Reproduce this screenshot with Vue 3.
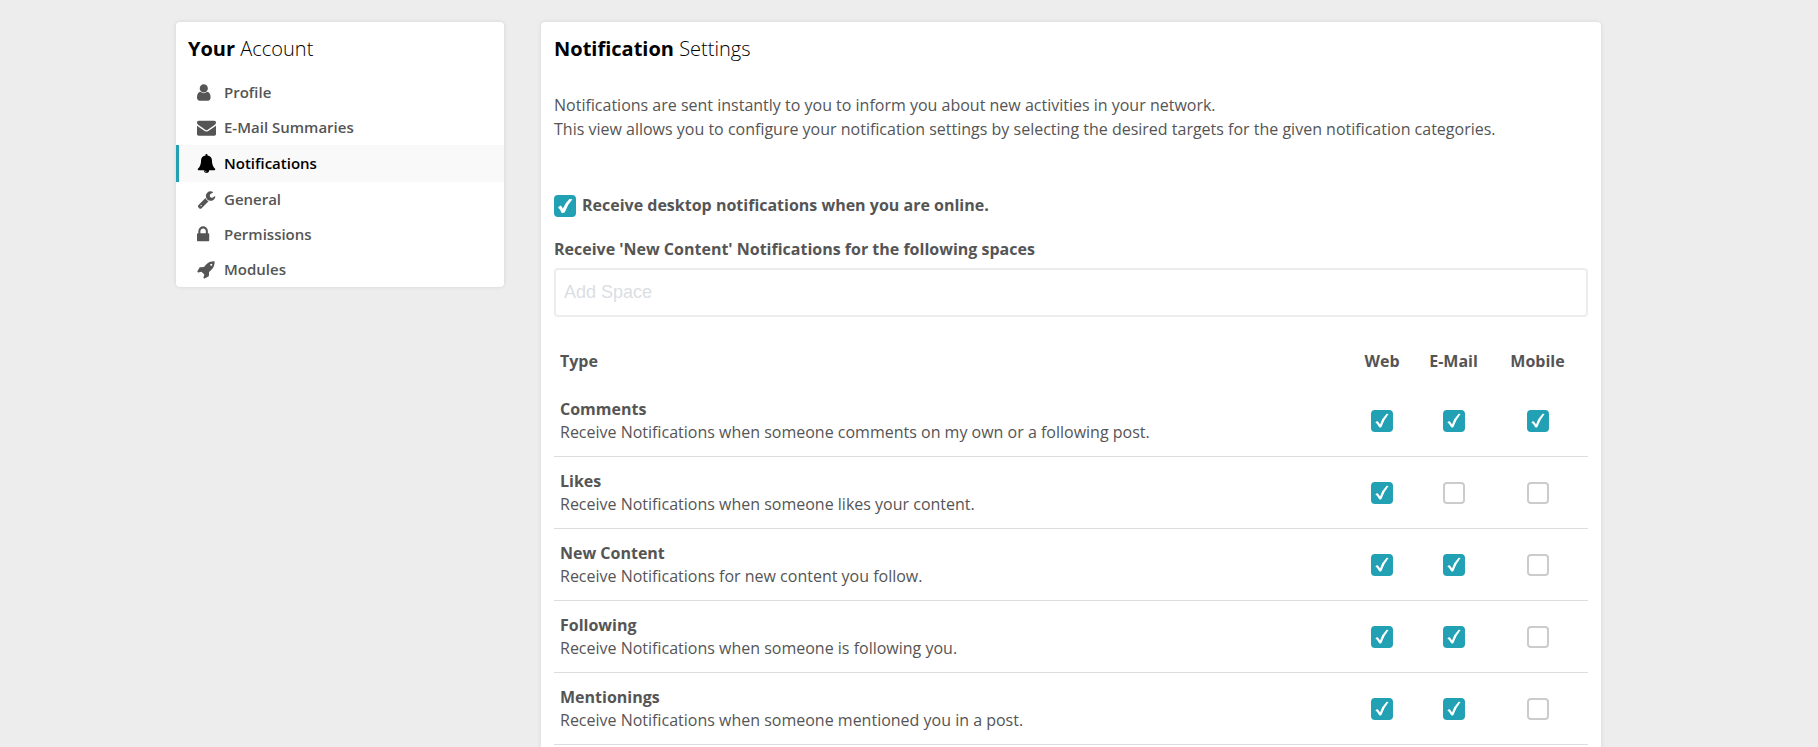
<script setup>
import { ref } from 'vue'

const menu = [
  { label: 'Profile', path: 'M1280 1399q0 109-62.5 187t-150.5 78h-854q-88 0-150.5-78t-62.5-187q0-85 8.5-160.5t31.5-152 58.5-131 94-89 134.5-34.5q131 128 313 128t313-128q76 0 134.5 34.5t94 89 58.5 131 31.5 152 8.5 160.5zm-256-887q0 159-112.5 271.5t-271.5 112.5-271.5-112.5-112.5-271.5 112.5-271.5 271.5-112.5 271.5 112.5 112.5 271.5z' },
  { label: 'E-Mail Summaries', path: 'M1792 710v794q0 66-47 113t-113 47h-1472q-66 0-113-47t-47-113v-794q44 49 101 87 362 246 497 345 57 42 92.5 65.5t94.5 48 110 24.5h2q51 0 110-24.5t94.5-48 92.5-65.5q170-123 498-345 57-39 100-87zm0-294q0 79-49 151t-122 123q-376 261-468 325-10 7-42.5 31t-54 38.5-52 32.5-57.5 27-50 9h-2q-23 0-50-9t-57.5-27-52-32.5-54-38.5-42.5-31q-91-64-262-182.5t-205-142.5q-62-42-117-115.5t-55-136.5q0-78 41.5-130t118.5-52h1472q65 0 112.5 47t47.5 113z' },
  { label: 'Notifications', active: true, path: 'M912 1696q0-16-16-16-59 0-101.5-42.5t-42.5-101.5q0-16-16-16t-16 16q0 73 51.5 124.5t124.5 51.5q16 0 16-16zm816-288q0 52-38 90t-90 38h-448q0 106-75 181t-181 75-181-75-75-181h-448q-52 0-90-38t-38-90q50-42 91-88t85-119.5 74.5-158.5 50-206 19.5-260q0-152 117-282.5t307-158.5q-8-19-8-39 0-40 28-68t68-28 68 28 28 68q0 20-8 39 190 28 307 158.5t117 282.5q0 139 19.5 260t50 206 74.5 158.5 85 119.5 91 88z' },
  { label: 'General', path: 'M448 1472q0-26-19-45t-45-19-45 19-19 45 19 45 45 19 45-19 19-45zm644-420l-682 682q-37 37-90 37-52 0-91-37l-106-108q-38-36-38-90 0-53 38-91l681-681q39 98 114.5 173.5t173.5 114.5zm634-435q0 39-23 106-47 134-164.5 217.5t-258.5 83.5q-185 0-316.5-131.5t-131.5-316.5 131.5-316.5 316.5-131.5q58 0 121.5 16.5t107.5 46.5q16 11 16 28t-16 28l-293 169v224l193 107q5-3 79-48.5t135.5-81 70.5-35.5q15 0 23.5 10t8.5 25z' },
  { label: 'Permissions', path: 'M320 768h512v-192q0-106-75-181t-181-75-181 75-75 181v192zm832 96v576q0 40-28 68t-68 28h-960q-40 0-68-28t-28-68v-576q0-40 28-68t68-28h32v-192q0-184 132-316t316-132 316 132 132 316v192h32q40 0 68 28t28 68z' },
  { label: 'Modules', path: 'M1440 448q0-40-28-68t-68-28-68 28-28 68 28 68 68 28 68-28 28-68zm224-288q0 249-75.5 430.5t-253.5 360.5q-81 80-195 176l-20 379q-2 16-16 26l-384 224q-7 4-16 4-12 0-23-9l-64-64q-13-14-8-32l85-276-281-281-276 85q-3 1-9 1-14 0-23-9l-64-64q-17-19-5-39l224-384q10-14 26-16l379-20q96-114 176-195 188-187 358-258t431-71q14 0 24 9.5t10 22.5z' },
]

const targets = ['Web', 'E-Mail', 'Mobile']

const desktop = ref(true)
const categories = ref([
  { name: 'Comments', text: 'Receive Notifications when someone comments on my own or a following post.', on: [true, true, true] },
  { name: 'Likes', text: 'Receive Notifications when someone likes your content.', on: [true, false, false] },
  { name: 'New Content', text: 'Receive Notifications for new content you follow.', on: [true, true, false] },
  { name: 'Following', text: 'Receive Notifications when someone is following you.', on: [true, true, false] },
  { name: 'Mentionings', text: 'Receive Notifications when someone mentioned you in a post.', on: [true, true, false] },
])
</script>

<template>
  <div class="page">
    <aside class="card side">
      <h2 class="heading"><strong>Your</strong> Account</h2>
      <nav class="menu">
        <a v-for="m in menu" :key="m.label" href="#" class="item" :class="{ active: m.active }">
          <svg class="icon" viewBox="0 0 1792 1792" aria-hidden="true"><path :d="m.path" /></svg>
          <span>{{ m.label }}</span>
        </a>
      </nav>
    </aside>

    <main class="card main">
      <h1 class="heading"><strong>Notification</strong> Settings</h1>
      <p class="intro">
        Notifications are sent instantly to you to inform you about new activities in your network.<br />
        This view allows you to configure your notification settings by selecting the desired targets for the given
        notification categories.
      </p>

      <label class="desktop">
        <span class="check">
          <input v-model="desktop" type="checkbox" />
          <svg viewBox="0 0 22 22" aria-hidden="true"><path d="M4 12.5L6.4 10.6Q8 11.8 8.9 13.6Q11.5 7.5 15.4 4L18.4 4.3Q13.5 9.500 10.8 17.3Q9 18.600 7.200 17.4Q6.300 14.2 4 12.5Z" /></svg>
        </span>
        <span>Receive desktop notifications when you are online.</span>
      </label>

      <label class="spaces-label" for="spaces">Receive 'New Content' Notifications for the following spaces</label>
      <input id="spaces" class="spaces" type="text" placeholder="Add Space" />

      <table class="grid">
        <colgroup>
          <col />
          <col class="c-web" />
          <col class="c-mail" />
          <col class="c-mobile" />
        </colgroup>
        <thead>
          <tr>
            <th scope="col" class="type">Type</th>
            <th v-for="t in targets" :key="t" scope="col">{{ t }}</th>
          </tr>
        </thead>
        <tbody>
          <tr v-for="c in categories" :key="c.name">
            <td><strong>{{ c.name }}</strong><br />{{ c.text }}</td>
            <td v-for="(t, i) in targets" :key="t">
              <label class="check">
                <input v-model="c.on[i]" type="checkbox" :aria-label="c.name + ' ' + t" />
                <svg viewBox="0 0 22 22" aria-hidden="true"><path d="M4.3 12.3L6.2 11Q8 12.4 9 14.4Q11.2 8 15.7 3.8L17.6 3.9Q13 9.5 10.4 17Q9.4 17.9 8.3 17.3Q6.8 14.1 4.3 12.3Z" /></svg>
              </label>
            </td>
          </tr>
        </tbody>
      </table>
    </main>
  </div>
</template>

<style>
body {
  margin: 0;
  background: #ededed;
}
</style>

<style scoped>
.page {
  display: grid;
  grid-template-columns: 328px minmax(0, 1fr);
  align-items: start;
  gap: 37px;
  padding: 22px 217px 24px 176px;
  color: #555;
  font-family: "Open Sans", sans-serif;
  font-size: 16px;
  line-height: 23px;
}
.card {
  background: #fff;
  border-radius: 4px;
  box-shadow: 0 0 4px rgba(0, 0, 0, 0.1);
}
.heading {
  margin: 0;
  color: #000;
  font-size: 20px;
  font-weight: 300;
  line-height: 28px;
}
.heading strong {
  font-weight: 700;
}
.side {
  overflow: hidden;
}
.side .heading {
  padding: 13px 12px 12px;
}
.menu {
  display: flex;
  flex-direction: column;
}
.item {
  display: flex;
  align-items: center;
  gap: 8px;
  height: 35px;
  padding-left: 18px;
  border-left: 3px solid transparent;
  color: #555;
  font-size: 15px;
  font-weight: 600;
  text-decoration: none;
}
.item.active {
  height: 37px;
  border-left-color: #21a1b3;
  background: #f9f9f9;
  color: #000;
}
.icon {
  width: 19px;
  height: 19px;
  fill: currentColor;
}
.main {
  padding: 13px 13px 24px;
}
.intro {
  margin: 30px 0 53px;
  line-height: 24px;
}
.desktop {
  display: flex;
  align-items: center;
  gap: 6px;
  font-weight: 700;
}
.check {
  position: relative;
  display: block;
  width: 22px;
  height: 22px;
}
.check input {
  display: block;
  width: 100%;
  height: 100%;
  margin: 0;
  border: 2px solid #ccc;
  border-radius: 4px;
  box-sizing: border-box;
  background: #fff;
  appearance: none;
}
.check input:checked {
  border-color: #21a1b3;
  background: #21a1b3;
}
.check svg {
  position: absolute;
  inset: 0;
  fill: #fff;
  pointer-events: none;
}
.check input:not(:checked) + svg {
  display: none;
}
.spaces-label {
  display: block;
  margin: 21px 0 7px;
  font-weight: 700;
}
.spaces {
  display: block;
  width: 100%;
  height: 49px;
  padding: 0 8px;
  border: 2px solid #ededed;
  border-radius: 4px;
  box-sizing: border-box;
  background: #fff;
  color: #555;
  font-family: "Liberation Sans", sans-serif;
  font-size: 18px;
}
.spaces::placeholder {
  color: #dbdee3;
  opacity: 1;
}
.grid {
  width: 100%;
  margin-top: 20px;
  border-collapse: collapse;
  table-layout: fixed;
}
.c-web {
  width: 76px;
}
.c-mail {
  width: 67px;
}
.c-mobile {
  width: 101px;
}
.grid th {
  height: 48px;
  padding: 0;
  font-weight: 700;
  text-align: center;
}
.grid th.type {
  padding-left: 6px;
  text-align: left;
}
.grid td {
  padding: 13px 6px 12px;
  border-bottom: 1px solid #ddd;
  vertical-align: middle;
}
.grid .check {
  margin: 0 auto;
}
</style>
